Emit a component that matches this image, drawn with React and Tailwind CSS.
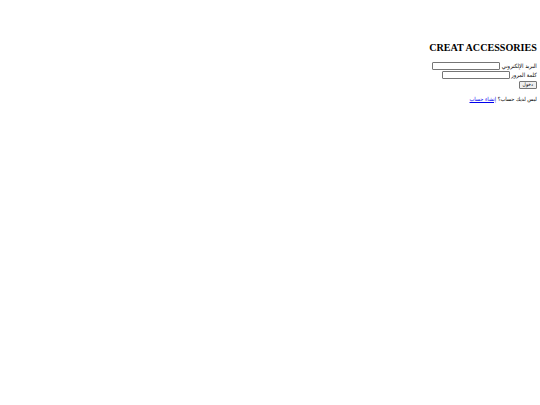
const arabic = { fontFamily: '"DejaVu Sans Condensed", "DejaVu Sans", sans-serif' };

export default function App() {
  return (
    <div dir="rtl" className="w-[540px] h-[405px] bg-white px-[3.2px] pt-[41px] text-black" style={{ fontFamily: '"Liberation Serif", serif' }}>
      <h2 className="text-[10.1px] font-bold leading-[14px] mb-[7px]">CREAT ACCESSORIES</h2>
      <form className="text-[5.8px] leading-[8px]" style={arabic}>
        <div className="flex items-center h-[8.6px]">
          <label>البريد الإلكتروني</label>
          <input type="email" className="w-[68px] h-[8px] mr-[1.5px] border border-[#767676] rounded-[1px] bg-white" />
        </div>
        <div className="flex items-center h-[8.6px]">
          <label>كلمة المرور</label>
          <input type="password" className="w-[68px] h-[8px] mr-[1.5px] border border-[#767676] rounded-[1px] bg-white" />
        </div>
        <div className="flex h-[9.5px] items-end">
          <button type="button" className="h-[8px] w-[18px] text-[5px] leading-none border border-[#767676] rounded-[1px] bg-[#efefef]" style={arabic}>دخول</button>
        </div>
      </form>
      <p className="mt-[7px] text-[5.6px] leading-[7.5px]" style={arabic}>
        ليس لديك حساب؟ <a href="#" className="text-[#0000ee] underline">إنشاء حساب</a>
      </p>
    </div>
  );
}
